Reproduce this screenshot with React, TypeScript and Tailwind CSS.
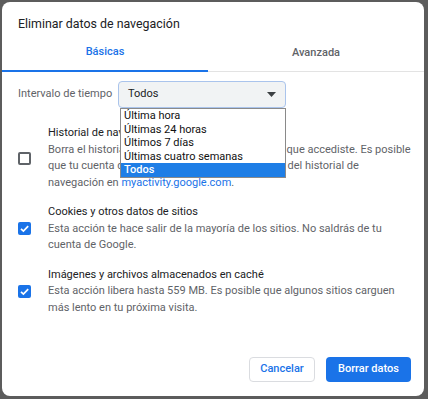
const CheckIcon = () => (
    <svg viewBox="0 0 13 13" className="w-[13px] h-[13px]">
        <rect x="0" y="0" width="13" height="13" rx="2" fill="#1a73e8" />
        <path d="M3 6.8 L5.4 9.1 L10.2 4.1" fill="none" stroke="#fff" strokeWidth="1.7" />
    </svg>
);

const Row = ({ checked, title, lines }: { checked: boolean; title: string; lines: React.ReactNode[] }) => (
    <div className="flex items-center">
        <div className="w-[13px] h-[13px] shrink-0">
            {checked ? <CheckIcon /> : <div className="w-[13px] h-[13px] rounded-[2px] border-2 border-[#5f6368]" />}
        </div>
        <div className="ml-[17px] text-[11px] leading-[16.5px] whitespace-nowrap">
            <div className="text-[#202124]">{title}</div>
            {lines.map((l, i) => (
                <div key={i} className="text-[#5f6368]">{l}</div>
            ))}
        </div>
    </div>
);

const options = ["Última hora", "Últimas 24 horas", "Últimos 7 días", "Últimas cuatro semanas", "Todos"];

export default function App() {
    return (
        <div className="w-[428px] h-[399px] bg-[#5c5c5c] pl-[2px] pt-[2px] pr-[4px] pb-[3px] font-['Roboto','Liberation_Sans',sans-serif]">
            <div className="w-full h-full bg-white rounded-[8px] flex flex-col relative">
                <div className="h-[33px] pt-[12px] pl-[16px] text-[12.4px] leading-[20px] text-[#202124]">Eliminar datos de navegación</div>
                <div className="h-[37px] flex border-b border-[#e3e3e3]">
                    <div className="w-[206px] flex items-center justify-center text-[11px] font-medium text-[#1a73e8] border-b-2 border-[#1a73e8] -mb-px">Básicas</div>
                    <div className="flex-1 flex items-center justify-center text-[11px] font-medium text-[#5f6368]">Avanzada</div>
                </div>
                <div className="mt-[9px] flex items-center pl-[16px] h-[27px]">
                    <span className="text-[11px] text-[#5f6368] w-[100px]">Intervalo de tiempo</span>
                    <div className="relative w-[168px] h-[27px]">
                        <div className="h-full rounded-[4px] bg-[#f1f3f4] border border-[#aac4ec] flex items-center pl-[9px] pr-[9px]">
                            <span className="text-[11px] text-[#202124] flex-1">Todos</span>
                            <svg viewBox="0 0 9 5" className="w-[9px] h-[5px]"><path d="M0 0 L9 0 L4.5 5 Z" fill="#3c4043" /></svg>
                        </div>
                        <div className="absolute left-[2px] top-full w-[166px] bg-white border border-[#8a8a8a] z-10">
                            {options.map((o, i) => (
                                <div key={o} className={`h-[13.6px] leading-[13.6px] pl-[3px] text-[11px] ${i === 4 ? "bg-[#1e7ee6] text-white font-medium" : "text-[#111]"}`}>{o}</div>
                            ))}
                        </div>
                    </div>
                </div>
                <div className="mt-[17px] pl-[16px] flex flex-col gap-[13px]">
                    <Row
                        checked={false}
                        title="Historial de navegación"
                        lines={[
                            "Borra el historial de todos los dispositivos en los que accediste. Es posible",
                            "que tu cuenta de Google tenga algunos registros del historial de",
                            <>navegación en <span className="text-[#1a73e8]">myactivity.google.com</span>.</>,
                        ]}
                    />
                    <Row
                        checked
                        title="Cookies y otros datos de sitios"
                        lines={["Esta acción te hace salir de la mayoría de los sitios. No saldrás de tu", "cuenta de Google."]}
                    />
                    <Row
                        checked
                        title="Imágenes y archivos almacenados en caché"
                        lines={["Esta acción libera hasta 559 MB. Es posible que algunos sitios carguen", "más lento en tu próxima visita."]}
                    />
                </div>
                <div className="mt-auto flex justify-end gap-[11px] pr-[13px] pb-[14px]">
                    <button className="w-[66px] h-[25px] rounded-[4px] border border-[#dadce0] bg-white text-[11px] font-medium text-[#1a73e8]">Cancelar</button>
                    <button className="w-[85px] h-[25px] rounded-[4px] bg-[#1a73e8] text-[11px] font-medium text-white">Borrar datos</button>
                </div>
            </div>
        </div>
    );
}
